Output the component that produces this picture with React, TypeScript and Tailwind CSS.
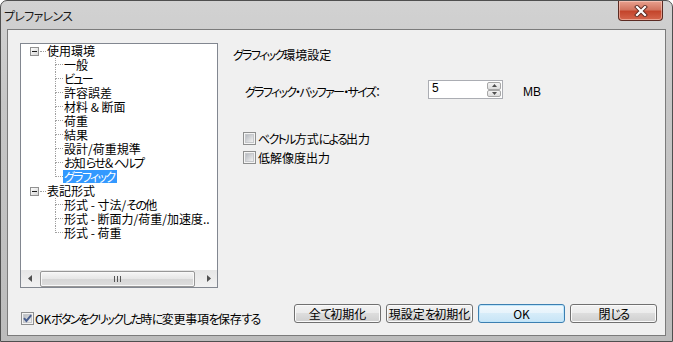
import React from 'react'

const tree = [
  {
    label: '使用環境',
    children: ['一般', 'ビュー', '許容誤差', '材料 & 断面', '荷重', '結果', '設計/荷重規準', 'お知らせ＆ヘルプ', 'グラフィック'],
  },
  {
    label: '表記形式',
    children: ['形式 - 寸法/その他', '形式 - 断面力/荷重/加速度..', '形式 - 荷重'],
  },
]

const selected = 'グラフィック'

// kana in the original UI font are narrower than kanji
function Jp({ text }: { text: string }) {
  const parts = text.split(/([\u3040-\u30ff]+)/)
  return (
    <>
      {parts.map((p, i) =>
        /[\u3040-\u30ff]/.test(p) ? (
          <span key={i} className="tracking-[-1.7px]">
            {p}
          </span>
        ) : (
          p
        )
      )}
    </>
  )
}

function CheckBox({ checked }: { checked?: boolean }) {
  return (
    <svg width="13" height="13" viewBox="0 0 13 13" className="shrink-0">
      <defs>
        <linearGradient id="cbg" x1="0" y1="0" x2="1" y2="1">
          <stop offset="0" stopColor="#b3b7bd" />
          <stop offset="1" stopColor="#f5f5f5" />
        </linearGradient>
      </defs>
      <rect x="0.5" y="0.5" width="12" height="12" fill="#f4f4f4" stroke="#8e8f8f" />
      <rect x="2.5" y="2.5" width="8" height="8" fill="url(#cbg)" stroke="#c6c8cb" />
      {checked && <path d="M3 6.2 L5.4 9 L10.2 3.2" stroke="#4a5f8e" strokeWidth="2" fill="none" />}
    </svg>
  )
}

function Expander() {
  return (
    <svg width="9" height="9" viewBox="0 0 9 9" className="shrink-0">
      <defs>
        <linearGradient id="exg" x1="0" y1="0" x2="1" y2="1">
          <stop offset="0" stopColor="#ffffff" />
          <stop offset="1" stopColor="#d4d4d4" />
        </linearGradient>
      </defs>
      <rect x="0.5" y="0.5" width="8" height="8" fill="url(#exg)" stroke="#919191" />
      <line x1="2" y1="4.5" x2="7" y2="4.5" stroke="#1c1c1c" />
    </svg>
  )
}

function Button({ label, primary }: { label: string; primary?: boolean }) {
  return (
    <div
      className={`w-[87px] h-[19px] rounded-[3px] border flex items-center justify-center text-[12px] leading-[14px] text-black ${
        primary
          ? 'border-[#3c7fb1] shadow-[inset_0_0_0_1px_#bfe6fb] bg-[linear-gradient(#f1f8fd,#e6f3fb_50%,#d6ecf9_50%,#c7e4f6)]'
          : 'border-[#707070] shadow-[inset_0_0_0_1px_#fafafa] bg-[linear-gradient(#f2f2f2,#ebebeb_50%,#dddddd_50%,#cfcfcf)]'
      }`}
    >
      <Jp text={label} />
    </div>
  )
}

function TreeView() {
  return (
    <div className="w-[198px] h-[245px] border border-[#828790] bg-white flex flex-col text-[12px] leading-[14px]">
      <div className="flex-1 overflow-hidden">
        {tree.map((node) => (
          <div key={node.label}>
            <div className="h-[14px] flex items-center pl-[9px]">
              <Expander />
              <span className="w-[6px] ml-[1px] border-t border-dotted border-[#a0a0a0]" />
              <span className="ml-[1px] whitespace-nowrap leading-[14px]">{node.label}</span>
            </div>
            {node.children.map((child, i) => {
              const last = i === node.children.length - 1
              const sel = child === selected
              return (
                <div key={child} className="h-[14px] flex pl-[34px]">
                  <div className="w-[8px] flex flex-col shrink-0">
                    <span className="h-[7px] border-l border-b border-dotted border-[#a0a0a0]" />
                    <span className={`h-[7px] ${last ? '' : 'border-l border-dotted border-[#a0a0a0]'}`} />
                  </div>
                  <span
                    className={`whitespace-nowrap px-[1px] h-[13px] leading-[13px] ${
                      sel ? 'bg-[#3399ff] text-white pr-[3px]' : 'text-black'
                    }`}
                  >
                    <Jp text={child} />
                  </span>
                </div>
              )
            })}
          </div>
        ))}
      </div>
      {/* horizontal scrollbar */}
      <div className="h-[17px] flex items-center bg-[linear-gradient(#e6e6e6,#f2f2f2)]">
        <div className="w-[17px] h-[17px] flex items-center justify-center">
          <svg width="4" height="7" viewBox="0 0 4 7">
            <path d="M4 0 L0 3.5 L4 7 Z" fill="#505050" />
          </svg>
        </div>
        <div className="ml-[2px] w-[155px] h-[16px] rounded-[2px] border border-[#979797] bg-[linear-gradient(#f6f6f6,#e6e6e6_50%,#d6d6d6_50%,#dedede)] shadow-[inset_0_0_0_1px_#f8f8f8] flex items-center justify-center gap-[2px]">
          <span className="w-px h-[6px] bg-[#555]" />
          <span className="w-px h-[6px] bg-[#555]" />
          <span className="w-px h-[6px] bg-[#555]" />
        </div>
        <div className="ml-[5px] w-[17px] h-[17px] flex items-center justify-center">
          <svg width="4" height="7" viewBox="0 0 4 7">
            <path d="M0 0 L4 3.5 L0 7 Z" fill="#505050" />
          </svg>
        </div>
      </div>
    </div>
  )
}

function SpinBox() {
  return (
    <div className="w-[75px] h-[19px] border border-[#abadb3] bg-white flex">
      <span className="flex-1 pl-[3px] text-[12px] leading-[15px] font-['Liberation_Sans',sans-serif]">5</span>
      <div className="w-[15px] flex flex-col py-px pr-px">
        <div className="flex-1 rounded-[2px] border border-[#a7a7a7] bg-[linear-gradient(#f4f4f4,#dcdcdc)] flex items-center justify-center">
          <svg width="5" height="3" viewBox="0 0 5 3">
            <path d="M0 3 L2.5 0 L5 3 Z" fill="#4d4d4d" />
          </svg>
        </div>
        <div className="flex-1 rounded-[2px] border border-[#a7a7a7] bg-[linear-gradient(#f4f4f4,#dcdcdc)] flex items-center justify-center">
          <svg width="5" height="3" viewBox="0 0 5 3">
            <path d="M0 0 L2.5 3 L5 0 Z" fill="#4d4d4d" />
          </svg>
        </div>
      </div>
    </div>
  )
}

export default function App() {
  return (
    <div className="w-[673px] h-[342px] bg-white overflow-hidden">
      <div className="w-[673px] h-[342px] flex flex-col rounded-t-[7px] border border-[#4f4f4f] bg-[linear-gradient(#d2d2d2,#c6c6c6_30%,#bcbcbc)] text-black font-['Noto_Sans_CJK_JP',sans-serif] [font-feature-settings:'palt']">
        {/* title bar */}
        <div className="h-[28px] flex items-start justify-between shrink-0">
          <span className="pl-[3px] pt-[8px] text-[12px] leading-[14px] tracking-[-0.7px] text-[#1a1a1a]">プレファレンス</span>
          <div className="mr-[9px] w-[45px] h-[20px] rounded-b-[4px] border border-t-0 border-[#5b2a22] bg-[linear-gradient(#e8a18f,#d27560_45%,#c4452c_55%,#d5664d)] shadow-[inset_0_0_0_1px_rgba(255,220,210,0.5)] flex items-center justify-center">
            <svg width="14" height="12" viewBox="0 0 14 12">
              <path d="M3 2 L11 10 M11 2 L3 10" stroke="#5a2a22" strokeWidth="4" strokeLinecap="square" />
              <path d="M3 2 L11 10 M11 2 L3 10" stroke="#ffffff" strokeWidth="2.2" strokeLinecap="square" />
            </svg>
          </div>
        </div>

        {/* client area */}
        <div className="mx-[6px] mb-[5px] flex-1 border border-[#7b7b7b] bg-[#f0f0f0] flex flex-col">
          <div className="flex items-start pl-[12px] pt-[13px]">
            <TreeView />
            <div className="ml-[15px] pt-[5px] flex flex-col text-[12px] leading-[14px]">
              <span>
                <Jp text="グラフィック環境設定" />
              </span>
              <div className="mt-[18px] flex items-start pl-[12px]">
                <span className="w-[183px] pt-[5px]">
                  <Jp text="グラフィック・バッファー・サイズ：" />
                </span>
                <SpinBox />
                <span className="ml-[20px] pt-[5px] font-['Liberation_Sans',sans-serif]">MB</span>
              </div>
              <div className="mt-[33px] pl-[10px] flex flex-col gap-[6px]">
                <div className="h-[13px] flex items-center gap-[2px]">
                  <CheckBox />
                  <span>
                    <Jp text="ベクトル方式による出力" />
                  </span>
                </div>
                <div className="h-[13px] flex items-center gap-[2px]">
                  <CheckBox />
                  <span>低解像度出力</span>
                </div>
              </div>
            </div>
          </div>

          <div className="mt-[16px] flex items-start justify-between pl-[13px] pr-[8px]">
            <div className="mt-[8px] h-[13px] flex items-center gap-px text-[12px] leading-[14px] tracking-[-0.3px]">
              <CheckBox checked />
              <span>
                <Jp text="OKボタンをクリックした時に変更事項を保存する" />
              </span>
            </div>
            <div className="flex gap-[5px]">
              <Button label="全て初期化" />
              <Button label="現設定を初期化" />
              <Button label="OK" primary />
              <Button label="閉じる" />
            </div>
          </div>
        </div>
      </div>
    </div>
  )
}
